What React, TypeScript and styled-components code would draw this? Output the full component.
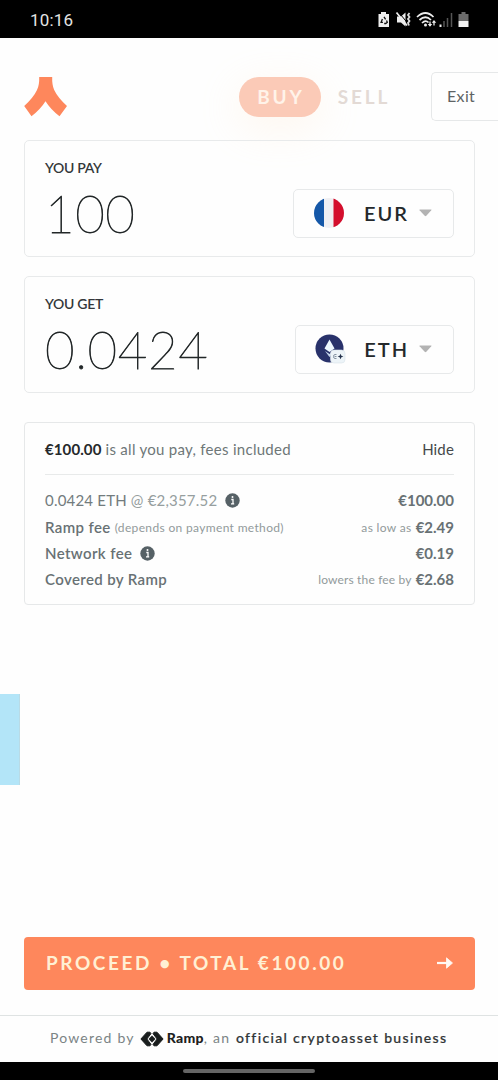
import React from "react";
import styled, { createGlobalStyle } from "styled-components";

const GlobalStyle = createGlobalStyle`
  * { box-sizing: border-box; }
  body { margin: 0; background: #fefefe; font-family: Lato, "Open Sans", sans-serif; }
  button { font: inherit; background: none; border: 0; padding: 0; margin: 0; text-align: left; }
`;

const Screen = styled.div`
  width: 498px;
  height: 1080px;
  display: flex;
  flex-direction: column;
  overflow: hidden;
  background: #fefefe;
`;

const StatusBar = styled.div`
  height: 38px;
  flex: none;
  background: #000;
  color: #e4e4e4;
  display: flex;
  align-items: center;
  justify-content: space-between;
  padding: 2px 27px 0 30px;
  font: 400 17px/20px Roboto, sans-serif;
  letter-spacing: 0.2px;
`;

const Header = styled.header`
  height: 102px;
  flex: none;
  display: flex;
  align-items: center;
  padding: 15px 0 0 24px;
`;

const Modes = styled.div`
  display: flex;
  align-items: center;
  margin-left: 171px;
  height: 41px;
`;

const Mode = styled.button<{ $active?: boolean }>`
  width: ${(p) => (p.$active ? 82 : 84)}px;
  height: 40px;
  border-radius: 20px;
  text-align: center;
  padding-left: 2px;
  font-size: 19px;
  font-weight: 700;
  letter-spacing: 2.9px;
  color: ${(p) => (p.$active ? "#fff3e9" : "#e3dad5")};
  background: ${(p) => (p.$active ? "#fbcab7" : "transparent")};
  box-shadow: ${(p) => (p.$active ? "0 10px 40px 2px rgba(255, 220, 180, 0.2)" : "none")};
`;

const ExitButton = styled.button`
  margin-left: auto;
  width: 67px;
  height: 49px;
  border: 1px solid #e6e8e9;
  border-right: 0;
  border-radius: 5px 0 0 5px;
  background: #fefefe;
  padding: 0 0 2px 15px;
  font-size: 16px;
  letter-spacing: 0.35px;
  color: #5e6364;
`;

const Main = styled.main`
  flex: 1;
  display: flex;
  flex-direction: column;
  padding: 0 23px 0 24px;
`;

const AmountCard = styled.section`
  height: 117px;
  flex: none;
  border: 1px solid #e8eaeb;
  border-radius: 5px;
  padding: 17px 20px 0;
  margin-bottom: 19px;
`;

const Label = styled.div`
  font-size: 14px;
  line-height: 20px;
  font-weight: 600;
  letter-spacing: -0.3px;
  color: #34383a;
`;

const AmountRow = styled.div`
  display: flex;
  justify-content: space-between;
  padding-top: 11px;
`;

const Amount = styled.div`
  font-size: 51px;
  line-height: 50px;
  font-weight: 200;
  letter-spacing: 0.6px;
  color: #222728;
  -webkit-text-stroke: 0.8px #222728;
`;

const CurrencyButton = styled.button<{ $width: number }>`
  width: ${(p) => p.$width}px;
  height: 49px;
  border: 1px solid #e7e9ea;
  border-radius: 5px;
  display: flex;
  align-items: center;
  padding: 0 21px 2px 19px;
  font-size: 20px;
  font-weight: 600;
  letter-spacing: 2px;
  color: #24282b;
`;

const Code = styled.span`
  margin-left: auto;
  margin-right: 10px;
`;

const Summary = styled.section`
  height: 183px;
  flex: none;
  margin-top: 10px;
  border: 1px solid #e6e8e9;
  border-radius: 4px;
  padding: 0 20px;
`;

const SummaryHead = styled.div`
  display: flex;
  justify-content: space-between;
  align-items: center;
  height: 52px;
  border-bottom: 1px solid #e8eaea;
  margin-bottom: 11px;
  font-size: 15px;
  letter-spacing: 0.28px;
  color: #6e7778;
`;

const Strong = styled.b`
  font-weight: 700;
  letter-spacing: 0.1px;
  color: #25292b;
`;

const Toggle = styled.button`
  color: #45494b;
  letter-spacing: 0.15px;
`;

const FeeRow = styled.div<{ $height?: number }>`
  display: flex;
  justify-content: space-between;
  align-items: center;
  height: ${(p) => p.$height ?? 26}px;
`;

const FeeSide = styled.div`
  display: flex;
  align-items: center;
  gap: 4px;
`;

const Rate = styled.span<{ $soft?: boolean }>`
  font-size: 15px;
  letter-spacing: 0.2px;
  color: ${(p) => (p.$soft ? "#969e9f" : "#727b7d")};
`;

const FeeName = styled.span`
  font-size: 15px;
  font-weight: 600;
  letter-spacing: 0.38px;
  color: #687174;
`;

const FeeValue = styled.span`
  font-size: 15px;
  font-weight: 700;
  color: #687174;
`;

const Note = styled.span<{ $spacing?: number }>`
  font-size: 12px;
  letter-spacing: ${(p) => p.$spacing ?? 0.34}px;
  color: #929a9b;
`;

const InfoIcon = styled.svg`
  margin-left: 4px;
`;

const SideTab = styled.div`
  width: 20px;
  height: 91px;
  margin: 89px 0 0 -24px;
  background: #b3e5f8;
  border-right: 1px solid #b9dbe6;
`;

const Proceed = styled.button`
  margin-top: auto;
  margin-bottom: 25px;
  height: 53px;
  flex: none;
  border-radius: 4px;
  background: #fe875c;
  color: #fff0d4;
  display: flex;
  align-items: center;
  justify-content: space-between;
  padding: 0 21px 2px 22px;
  font-size: 19px;
  font-weight: 700;
  letter-spacing: 2.57px;
`;

const Footer = styled.footer`
  height: 47px;
  flex: none;
  border-top: 1px solid #dfe3e3;
  display: flex;
  align-items: center;
  padding: 0 0 3px 50px;
  font-size: 14px;
  letter-spacing: 1.2px;
  color: #7b8485;
  white-space: pre;
`;

const FooterMark = styled.svg`
  margin: 3px 3px 0 5px;
`;

const Brand = styled.b`
  font-weight: 900;
  font-size: 14px;
  letter-spacing: 0.3px;
  color: #1d2121;
`;

const Official = styled.span`
  margin-left: 1px;
  font-weight: 500;
  letter-spacing: 1.34px;
  color: #303536;
  -webkit-text-stroke: 0.2px #303536;
`;

const NavBar = styled.div`
  height: 18px;
  flex: none;
  background: #000;
  display: flex;
  justify-content: center;
  padding-top: 7px;
`;

const Handle = styled.div`
  width: 132px;
  height: 4px;
  border-radius: 2px;
  background: #656565;
`;

const Info = () => (
  <InfoIcon width="15" height="15" viewBox="0 0 15 15">
    <circle cx="7.5" cy="7.5" r="7.2" fill="#566166" />
    <path d="M6.300 6.500h1.700v4M6 10.800h3.200" stroke="#fff" strokeWidth="1.300" fill="none" />
    <circle cx="7.5" cy="4" r="1" fill="#fff" />
  </InfoIcon>
);

const Caret = () => (
  <svg width="13" height="8" viewBox="0 0 13 8">
    <path d="M1 .5h11q1 0 .3.8L7.3 6.8q-.8.8-1.6 0L.6 1.3Q0 .5 1 .5z" fill="#b3b3b3" />
  </svg>
);

const Flag = () => (
  <svg width="32" height="32" viewBox="0 0 32 32">
    <defs>
      <clipPath id="flag"><circle cx="16" cy="16" r="15" /></clipPath>
    </defs>
    <g clipPath="url(#flag)">
      <path d="M0 0h32v32H0z" fill="#f0f0f3" />
      <path d="M0 0h11v32H0z" fill="#1558a8" />
      <path d="M20.500 0H32v32H20.500z" fill="#d40f2d" />
    </g>
  </svg>
);

const Ether = () => (
  <svg width="32" height="32" viewBox="0 0 32 32">
    <circle cx="14.500" cy="15.500" r="14" fill="#29326b" />
    <path d="M14.500 6.500l5 9-5 3.500-5-3.500z" fill="#eef8ff" />
    <path d="M10 18l4.500 3 4.500-3-4.500 6z" fill="#c7d7ec" />
    <rect x="15.500" y="17" width="14.500" height="13" rx="3.500" fill="#edf4f8" stroke="#d9e2ea" strokeWidth=".6" />
    <path d="M21.500 21.500H20q-1.500 0-1.500 2t1.500 2h1.500M19.500 23.500h2" stroke="#8794a3" strokeWidth="1" fill="none" />
    <path d="M25.500 20.800l.9 1.900 2 .8-2 .8-.9 1.900-.9-1.900-2-.8 2-.8z" fill="#26334d" />
  </svg>
);

const StatusIcons = () => (
  <svg width="94" height="20" viewBox="377.500 10 94 20">
    <path d="M379 14h2.500v-2h5v2h3v13h-10.500z" fill="#eee" />
    <path d="M384.500 16.800l1.600 2.600M382.900 19l-1.300 3.300h1.800M387 20.500l.8 1.800-1.600 1.200h-1.500" stroke="#111" strokeWidth="1.300" fill="none" />
    <path d="M397.500 16.500h4l4.500-4v14l-4.500-4h-4z" fill="#eee" />
    <path d="M399 12l9 11" stroke="#000" strokeWidth="1" />
    <path d="M397 12.500l10.500 13" stroke="#eee" strokeWidth="1.700" />
    <path d="M410 13l-1.500 2 1.500 2-1.500 2 1.500 2-1.500 2 1 2.500" stroke="#ddd" strokeWidth="1.800" fill="none" />
    <path d="M417.500 17q8.500-8 16.500 0M420 20q6-5.500 11.500 0M422.500 23q3.500-3.500 6.500-.5" stroke="#eee" strokeWidth="1.700" fill="none" />
    <circle cx="426" cy="25" r="1.500" fill="#eee" />
    <path d="M430.500 21.500v4M434.500 25.500v-4" stroke="#eee" strokeWidth="1.300" />
    <path d="M428.300 24h4.400l-2.200 2.800zM432.300 22.800h4.400l-2.200-2.800z" fill="#eee" />
    <path d="M440 24.500h2V27h-2z" fill="#eee" />
    <path d="M444.500 21v6M448 18v9M452 13v14" stroke="#555" strokeWidth="1.500" />
    <path d="M459 14h3v-2h4v2h3v7h-10z" fill="#6b6b6b" />
    <path d="M459 21h10v6h-10z" fill="#f2f2f2" />
  </svg>
);

const Logo = () => (
  <svg width="44" height="42" viewBox="24 76 44 42">
    <path d="M39.200 77h13q-.3 8 2 13 3.500 7.500 12.800 16l-7.500 10.300q-9-7-14-15-5 8-14 15L24.200 106Q33.500 97.500 37 90q2.500-5 2.200-13z" fill="#fe875c" />
  </svg>
);

const Arrow = () => (
  <svg width="18" height="14" viewBox="0 0 18 14">
    <path d="M1 7h11" stroke="#fff8f2" strokeWidth="2.200" />
    <path d="M10.500 1.800L16.500 7l-6 5.200z" fill="#fff8f2" stroke="#fff8f2" strokeWidth=".8" strokeLinejoin="round" />
  </svg>
);

const RampMark = () => (
  <FooterMark width="24" height="16" viewBox="0 0 24 16">
    <path d="M7 1.200h3l1 1.400L6.900 8l4.100 5.400-1 1.400H7L.9 8zM17 1.200h-3l-1 1.400L17.100 8 13 13.400l1 1.400h3L23.100 8z" fill="#191d1d" stroke="#191d1d" strokeWidth="1" strokeLinejoin="round" />
    <path d="M12 4.500L15.500 8 12 11.500 8.500 8z" fill="#191d1d" />
  </FooterMark>
);

export default function App() {
  return (
    <Screen>
      <GlobalStyle />
      <StatusBar>
        <span>10:16</span>
        <StatusIcons />
      </StatusBar>
      <Header>
        <Logo />
        <Modes>
          <Mode $active>BUY</Mode>
          <Mode>SELL</Mode>
        </Modes>
        <ExitButton>Exit</ExitButton>
      </Header>
      <Main>
        <AmountCard>
          <Label>YOU PAY</Label>
          <AmountRow>
            <Amount>100</Amount>
            <CurrencyButton $width={161}><Flag /><Code>EUR</Code><Caret /></CurrencyButton>
          </AmountRow>
        </AmountCard>
        <AmountCard>
          <Label>YOU GET</Label>
          <AmountRow>
            <Amount>0.0424</Amount>
            <CurrencyButton $width={159}><Ether /><Code>ETH</Code><Caret /></CurrencyButton>
          </AmountRow>
        </AmountCard>
        <Summary>
          <SummaryHead>
            <span><Strong>€100.00</Strong> is all you pay, fees included</span>
            <Toggle>Hide</Toggle>
          </SummaryHead>
          <FeeRow $height={28}>
            <FeeSide><Rate>0.0424 ETH</Rate><Rate $soft>@ €2,357.52</Rate><Info /></FeeSide>
            <FeeValue>€100.00</FeeValue>
          </FeeRow>
          <FeeRow>
            <FeeSide><FeeName>Ramp fee</FeeName><Note>(depends on payment method)</Note></FeeSide>
            <FeeSide><Note>as low as</Note><FeeValue>€2.49</FeeValue></FeeSide>
          </FeeRow>
          <FeeRow>
            <FeeSide><FeeName>Network fee</FeeName><Info /></FeeSide>
            <FeeValue>€0.19</FeeValue>
          </FeeRow>
          <FeeRow>
            <FeeName>Covered by Ramp</FeeName>
            <FeeSide><Note $spacing={0.16}>lowers the fee by</Note><FeeValue>€2.68</FeeValue></FeeSide>
          </FeeRow>
        </Summary>
        <SideTab />
        <Proceed><span>PROCEED • TOTAL €100.00</span><Arrow /></Proceed>
      </Main>
      <Footer>
        <span>Powered by</span>
        <RampMark />
        <Brand>Ramp</Brand>
        <span>, an </span>
        <Official>official cryptoasset business</Official>
      </Footer>
      <NavBar><Handle /></NavBar>
    </Screen>
  );
}
